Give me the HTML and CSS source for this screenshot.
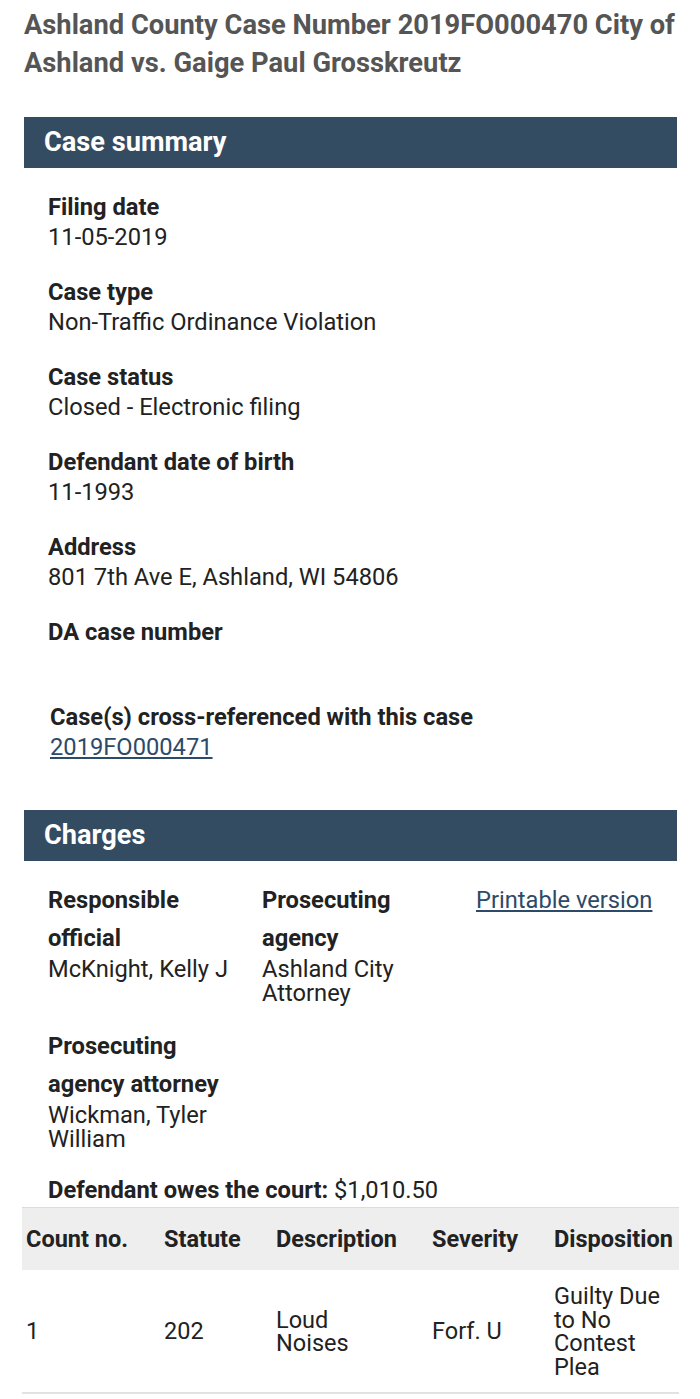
FILE: index.html
```html
<!DOCTYPE html>
<html lang="en">
<head>
<meta charset="utf-8">
<title>Case 2019FO000470</title>
<link rel="stylesheet" href="styles.css">
</head>
<body>
<main class="page">
  <h1 class="title">Ashland County Case Number 2019FO000470 City of Ashland vs. Gaige Paul Grosskreutz</h1>

  <section class="panel">
    <h2 class="bar">Case summary</h2>
    <dl class="summary">
      <div class="field"><dt>Filing date</dt><dd>11-05-2019</dd></div>
      <div class="field"><dt>Case type</dt><dd>Non-Traffic Ordinance Violation</dd></div>
      <div class="field"><dt>Case status</dt><dd>Closed - Electronic filing</dd></div>
      <div class="field"><dt>Defendant date of birth</dt><dd>11-1993</dd></div>
      <div class="field"><dt>Address</dt><dd>801 7th Ave E, Ashland, WI 54806</dd></div>
      <div class="field"><dt>DA case number</dt><dd class="empty"></dd></div>
    </dl>
    <div class="xref">
      <div class="xref-label">Case(s) cross-referenced with this case</div>
      <a class="link" href="#">2019FO000471</a>
    </div>
  </section>

  <section class="panel charges">
    <h2 class="bar">Charges</h2>
    <div class="charge-grid">
      <div class="cfield"><div class="clabel">Responsible official</div><div class="cvalue">McKnight, Kelly J</div></div>
      <div class="cfield"><div class="clabel">Prosecuting agency</div><div class="cvalue">Ashland City Attorney</div></div>
      <div class="cfield"><a class="link print" href="#">Printable version</a></div>
      <div class="cfield"><div class="clabel">Prosecuting agency attorney</div><div class="cvalue">Wickman, Tyler William</div></div>
    </div>
    <p class="owes"><strong>Defendant owes the court:</strong> $1,010.50</p>
    <table class="counts">
      <colgroup>
        <col class="c1"><col class="c2"><col class="c3"><col class="c4"><col class="c5">
      </colgroup>
      <thead>
        <tr><th>Count no.</th><th>Statute</th><th>Description</th><th>Severity</th><th>Disposition</th></tr>
      </thead>
      <tbody>
        <tr><td>1</td><td>202</td><td><span class="narrow">Loud Noises</span></td><td>Forf. U</td><td><span class="narrow2">Guilty Due to No Contest Plea</span></td></tr>
      </tbody>
    </table>
  </section>
</main>
</body>
</html>
```

FILE: styles.css
```css
* { box-sizing: border-box; }

body {
  margin: 0;
  background: #ffffff;
  font-family: Roboto, "Liberation Sans", Arial, sans-serif;
  color: #222222;
}

.page {
  padding: 6px 23px 0 24px;
}

.title {
  margin: 0 0 35px;
  font-size: 27.3px;
  line-height: 38px;
  font-weight: 700;
  color: #555555;
}

.bar {
  margin: 0;
  height: 51px;
  padding-left: 20px;
  background: #344c62;
  color: #ffffff;
  font-size: 27.2px;
  font-weight: 700;
  line-height: 51px;
}

.summary {
  margin: 24px 0 0;
  padding-left: 24px;
  display: flex;
  flex-direction: column;
  gap: 25px;
}

.field dt {
  font-size: 23.7px;
  font-weight: 700;
  line-height: 30px;
}

.field dd {
  margin: 0;
  font-size: 23.7px;
  line-height: 30px;
  min-height: 30px;
}

.xref {
  margin-top: 25px;
  padding-left: 26px;
  font-size: 23.7px;
  line-height: 30px;
}

.xref-label {
  font-weight: 700;
}

.link {
  color: #2d4a68;
  text-decoration: underline;
}

.charges {
  margin-top: 48px;
}

.charge-grid {
  margin-top: 20px;
  padding-left: 24px;
  display: grid;
  grid-template-columns: 190px 190px auto;
  column-gap: 24px;
  row-gap: 22px;
}

.clabel {
  font-size: 23.7px;
  font-weight: 700;
  line-height: 38px;
}

.cvalue {
  font-size: 23.7px;
  line-height: 24px;
}

.print {
  font-size: 23.7px;
  line-height: 38px;
}

.owes {
  margin: 27px 0 0;
  padding-left: 24px;
  font-size: 23.7px;
  line-height: 24px;
}

.counts {
  margin: 5px -2px 0;
  width: 657px;
  border-collapse: collapse;
  table-layout: fixed;
  font-size: 23.5px;
}

.c1 { width: 138px; }
.c2 { width: 112px; }
.c3 { width: 156px; }
.c4 { width: 122px; }
.c5 { width: 129px; }

.counts thead tr {
  background: #eeeeee;
  border-top: 1px solid #dddddd;
}

.counts th {
  height: 62px;
  padding: 0 0 0 4px;
  text-align: left;
  font-weight: 700;
  white-space: nowrap;
}

.counts tbody tr {
  border-bottom: 2px solid #e2e2e2;
}

.counts td {
  height: 123px;
  padding: 3px 4px 0;
  line-height: 23.5px;
  vertical-align: middle;
}

.narrow { display: block; max-width: 110px; }
.narrow2 { display: block; max-width: 122px; }
```
